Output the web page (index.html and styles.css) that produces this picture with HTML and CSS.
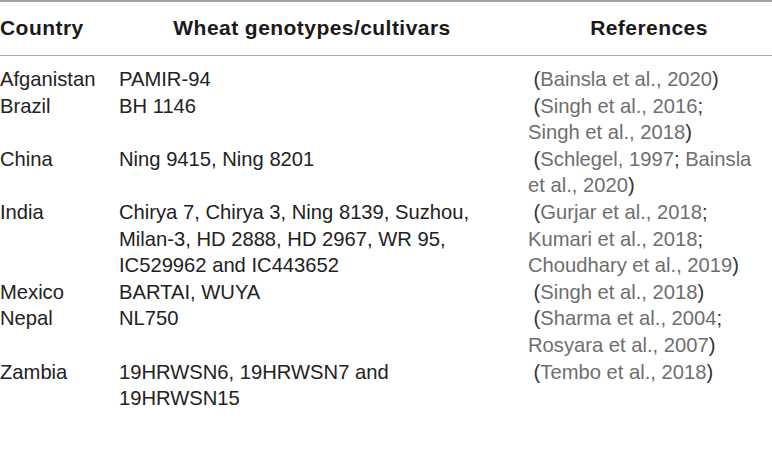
FILE: index.html
```html
<!DOCTYPE html>
<html>
<head>
<meta charset="utf-8">
<link rel="stylesheet" href="styles.css">
</head>
<body>
<table class="tbl">
  <colgroup>
    <col class="c1">
    <col class="c2">
    <col class="c3">
  </colgroup>
  <thead>
    <tr>
      <th class="h-country">Country</th>
      <th class="h-geno">Wheat genotypes/cultivars</th>
      <th class="h-ref">References</th>
    </tr>
  </thead>
  <tbody>
    <tr class="first">
      <td>Afganistan</td>
      <td>PAMIR-94</td>
      <td class="ref">&nbsp;<span class="p">(</span>Bainsla et al., 2020<span class="p">)</span></td>
    </tr>
    <tr>
      <td>Brazil</td>
      <td>BH 1146</td>
      <td class="ref">&nbsp;<span class="p">(</span>Singh et al., 2016<span class="p">;</span><br>Singh et al., 2018<span class="p">)</span></td>
    </tr>
    <tr>
      <td>China</td>
      <td>Ning 9415, Ning 8201</td>
      <td class="ref">&nbsp;<span class="p">(</span>Schlegel, 1997<span class="p">;</span> Bainsla<br>et al., 2020<span class="p">)</span></td>
    </tr>
    <tr>
      <td>India</td>
      <td>Chirya 7, Chirya 3, Ning 8139, Suzhou,<br>Milan-3, HD 2888, HD 2967, WR 95,<br>IC529962 and IC443652</td>
      <td class="ref">&nbsp;<span class="p">(</span>Gurjar et al., 2018<span class="p">;</span><br>Kumari et al., 2018<span class="p">;</span><br>Choudhary et al., 2019<span class="p">)</span></td>
    </tr>
    <tr>
      <td>Mexico</td>
      <td>BARTAI, WUYA</td>
      <td class="ref">&nbsp;<span class="p">(</span>Singh et al., 2018<span class="p">)</span></td>
    </tr>
    <tr>
      <td>Nepal</td>
      <td>NL750</td>
      <td class="ref">&nbsp;<span class="p">(</span>Sharma et al., 2004<span class="p">;</span><br>Rosyara et al., 2007<span class="p">)</span></td>
    </tr>
    <tr>
      <td>Zambia</td>
      <td>19HRWSN6, 19HRWSN7 and<br>19HRWSN15</td>
      <td class="ref">&nbsp;<span class="p">(</span>Tembo et al., 2018<span class="p">)</span></td>
    </tr>
  </tbody>
</table>
</body>
</html>
```
FILE: styles.css
```css
html, body {
  margin: 0;
  padding: 0;
  background: #ffffff;
}
body {
  width: 772px;
  height: 452px;
  overflow: hidden;
}
.tbl {
  width: 772px;
  table-layout: fixed;
  border-collapse: collapse;
  border-spacing: 0;
  font-family: "Liberation Sans", Arial, sans-serif;
  color: #222222;
}
.c1 { width: 119px; }
.c2 { width: 409px; }
.c3 { width: 244px; }

.tbl thead tr {
  border-top: 2px solid #a3a3a3;
  border-bottom: 1px solid #a8a8a8;
}
.tbl th {
  font-size: 21px;
  font-weight: bold;
  letter-spacing: 0.45px;
  line-height: 29px;
  padding: 11px 0 13px 0;
  color: #1a1a1a;
  white-space: nowrap;
}
.h-country { text-align: left; }
.h-geno { text-align: center; padding-right: 23px !important; }
.h-ref { text-align: center; padding-right: 2px !important; }

.tbl td {
  font-size: 20.2px;
  line-height: 26.6px;
  padding: 0;
  vertical-align: top;
  white-space: nowrap;
}
.tbl tr.first td {
  padding-top: 10px;
}
.ref {
  color: #6e6e6e;
}
.ref .p {
  color: #333333;
}
```
